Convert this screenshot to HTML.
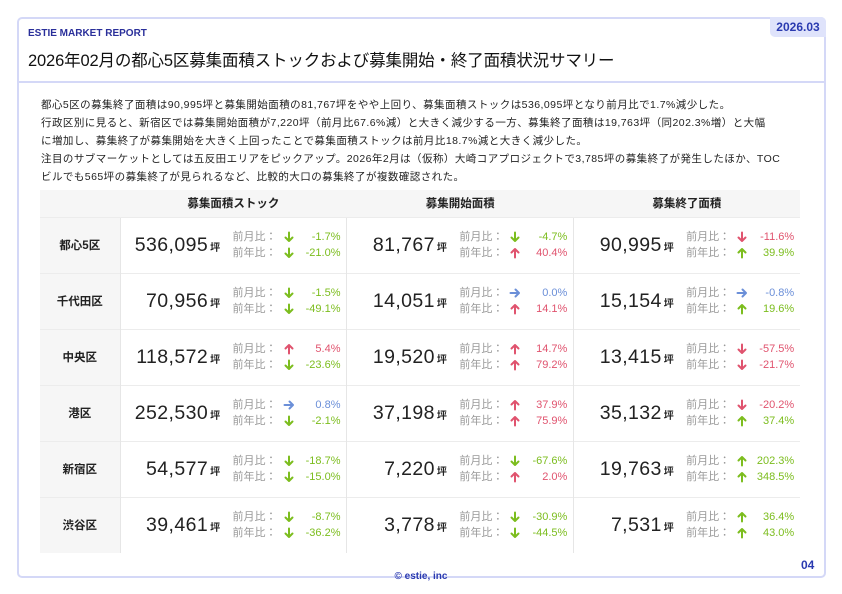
<!DOCTYPE html><html><head><meta charset="utf-8"><style>
*{margin:0;padding:0;box-sizing:border-box}
body{width:842px;height:594px;background:#fff;font-family:"Liberation Sans","Noto Sans CJK JP",sans-serif;position:relative;overflow:hidden}
.card{position:absolute;left:17px;top:17px;width:809px;height:561px;border:2px solid #d4d8f7;border-radius:5px}
.hdr{position:absolute;left:17px;top:17px;width:809px;height:66px;border-bottom:2px solid #d4d8f7}
.brand{position:absolute;left:28px;top:28px;font-size:10px;font-weight:bold;color:#2a2f9a}
.title{position:absolute;left:28px;top:47px;font-size:16.5px;color:#111;letter-spacing:-0.15px}
.badge{position:absolute;left:770px;top:17px;width:56px;height:20px;background:#dfe3fb;border-radius:0 5px 0 5px;color:#2a3ab0;font-weight:bold;font-size:12px;text-align:center;line-height:20px}
.txt{position:absolute;left:41px;top:96px;font-size:10.5px;line-height:18px;color:#222;width:790px;letter-spacing:0.45px;white-space:nowrap}
table{position:absolute;left:40px;top:190px;width:760px;border-collapse:collapse;background:#f6f6f6}
th{height:27px;font-size:11.5px;font-weight:bold;color:#222}
td{height:56px;border-top:1px solid #ececec;background:#fff;border-left:1px solid #e6e6e6}
td.l{background:#f6f6f6;font-size:11.5px;font-weight:bold;text-align:center;width:80px;border-left:none;color:#222}
.c{display:flex;align-items:center}
.n{width:100px;text-align:right;font-size:19.5px;color:#222;letter-spacing:.4px}
.n small{font-size:10px;margin-left:2px;font-weight:bold}
.cmp{margin-left:12px;font-size:11px;line-height:16px;width:108px}
.cmp div{display:flex;align-items:center}
.k{color:#999;width:50px}
.a{width:12px;height:12px}
.v{flex:1;text-align:right}
.g{color:#7cbd1e}.r{color:#e0536e}.b{color:#6b8fd8}
.foot{position:absolute;left:0;width:842px;top:571px;text-align:center;font-size:10px;font-weight:bold;color:#2a3ab0}
.pg{position:absolute;left:801px;top:558px;font-size:12px;font-weight:bold;color:#2a3ab0}
</style></head><body>
<svg width="0" height="0" style="position:absolute"><defs>
<symbol id="d" viewBox="0 0 12 12"><path d="M6 1.5V10M2.5 6.5L6 10L9.5 6.5" fill="none" stroke="currentColor" stroke-width="2" stroke-linecap="round" stroke-linejoin="round"/></symbol>
<symbol id="u" viewBox="0 0 12 12"><path d="M6 10.5V2M2.5 5.5L6 2L9.5 5.5" fill="none" stroke="currentColor" stroke-width="2" stroke-linecap="round" stroke-linejoin="round"/></symbol>
<symbol id="rt" viewBox="0 0 12 12"><path d="M1.5 6H10M6.5 2.5L10 6L6.5 9.5" fill="none" stroke="currentColor" stroke-width="2" stroke-linecap="round" stroke-linejoin="round"/></symbol>
</defs></svg>
<div class="card"></div><div class="hdr"></div>
<div class="brand">ESTIE MARKET REPORT</div>
<div class="badge">2026.03</div>
<div class="title">2026年02月の都心5区募集面積ストックおよび募集開始・終了面積状況サマリー</div>
<div class="txt">都心5区の募集終了面積は90,995坪と募集開始面積の81,767坪をやや上回り、募集面積ストックは536,095坪となり前月比で1.7%減少した。<br>行政区別に見ると、新宿区では募集開始面積が7,220坪（前月比67.6%減）と大きく減少する一方、募集終了面積は19,763坪（同202.3%増）と大幅<br>に増加し、募集終了が募集開始を大きく上回ったことで募集面積ストックは前月比18.7%減と大きく減少した。<br>注目のサブマーケットとしては五反田エリアをピックアップ。2026年2月は（仮称）大崎コアプロジェクトで3,785坪の募集終了が発生したほか、TOC<br>ビルでも565坪の募集終了が見られるなど、比較的大口の募集終了が複数確認された。</div>
<table>
<tr><th></th><th>募集面積ストック</th><th>募集開始面積</th><th>募集終了面積</th></tr>
<tr><td class="l">都心5区</td>
<td><div class="c"><div class="n">536,095<small>坪</small></div><div class="cmp"><div><span class="k">前月比：</span><svg class="a g"><use href="#d"/></svg><span class="v g">-1.7%</span></div><div><span class="k">前年比：</span><svg class="a g"><use href="#d"/></svg><span class="v g">-21.0%</span></div></div></div></td>
<td><div class="c"><div class="n">81,767<small>坪</small></div><div class="cmp"><div><span class="k">前月比：</span><svg class="a g"><use href="#d"/></svg><span class="v g">-4.7%</span></div><div><span class="k">前年比：</span><svg class="a r"><use href="#u"/></svg><span class="v r">40.4%</span></div></div></div></td>
<td><div class="c"><div class="n">90,995<small>坪</small></div><div class="cmp"><div><span class="k">前月比：</span><svg class="a r"><use href="#d"/></svg><span class="v r">-11.6%</span></div><div><span class="k">前年比：</span><svg class="a g"><use href="#u"/></svg><span class="v g">39.9%</span></div></div></div></td></tr>
<tr><td class="l">千代田区</td>
<td><div class="c"><div class="n">70,956<small>坪</small></div><div class="cmp"><div><span class="k">前月比：</span><svg class="a g"><use href="#d"/></svg><span class="v g">-1.5%</span></div><div><span class="k">前年比：</span><svg class="a g"><use href="#d"/></svg><span class="v g">-49.1%</span></div></div></div></td>
<td><div class="c"><div class="n">14,051<small>坪</small></div><div class="cmp"><div><span class="k">前月比：</span><svg class="a b"><use href="#rt"/></svg><span class="v b">0.0%</span></div><div><span class="k">前年比：</span><svg class="a r"><use href="#u"/></svg><span class="v r">14.1%</span></div></div></div></td>
<td><div class="c"><div class="n">15,154<small>坪</small></div><div class="cmp"><div><span class="k">前月比：</span><svg class="a b"><use href="#rt"/></svg><span class="v b">-0.8%</span></div><div><span class="k">前年比：</span><svg class="a g"><use href="#u"/></svg><span class="v g">19.6%</span></div></div></div></td></tr>
<tr><td class="l">中央区</td>
<td><div class="c"><div class="n">118,572<small>坪</small></div><div class="cmp"><div><span class="k">前月比：</span><svg class="a r"><use href="#u"/></svg><span class="v r">5.4%</span></div><div><span class="k">前年比：</span><svg class="a g"><use href="#d"/></svg><span class="v g">-23.6%</span></div></div></div></td>
<td><div class="c"><div class="n">19,520<small>坪</small></div><div class="cmp"><div><span class="k">前月比：</span><svg class="a r"><use href="#u"/></svg><span class="v r">14.7%</span></div><div><span class="k">前年比：</span><svg class="a r"><use href="#u"/></svg><span class="v r">79.2%</span></div></div></div></td>
<td><div class="c"><div class="n">13,415<small>坪</small></div><div class="cmp"><div><span class="k">前月比：</span><svg class="a r"><use href="#d"/></svg><span class="v r">-57.5%</span></div><div><span class="k">前年比：</span><svg class="a r"><use href="#d"/></svg><span class="v r">-21.7%</span></div></div></div></td></tr>
<tr><td class="l">港区</td>
<td><div class="c"><div class="n">252,530<small>坪</small></div><div class="cmp"><div><span class="k">前月比：</span><svg class="a b"><use href="#rt"/></svg><span class="v b">0.8%</span></div><div><span class="k">前年比：</span><svg class="a g"><use href="#d"/></svg><span class="v g">-2.1%</span></div></div></div></td>
<td><div class="c"><div class="n">37,198<small>坪</small></div><div class="cmp"><div><span class="k">前月比：</span><svg class="a r"><use href="#u"/></svg><span class="v r">37.9%</span></div><div><span class="k">前年比：</span><svg class="a r"><use href="#u"/></svg><span class="v r">75.9%</span></div></div></div></td>
<td><div class="c"><div class="n">35,132<small>坪</small></div><div class="cmp"><div><span class="k">前月比：</span><svg class="a r"><use href="#d"/></svg><span class="v r">-20.2%</span></div><div><span class="k">前年比：</span><svg class="a g"><use href="#u"/></svg><span class="v g">37.4%</span></div></div></div></td></tr>
<tr><td class="l">新宿区</td>
<td><div class="c"><div class="n">54,577<small>坪</small></div><div class="cmp"><div><span class="k">前月比：</span><svg class="a g"><use href="#d"/></svg><span class="v g">-18.7%</span></div><div><span class="k">前年比：</span><svg class="a g"><use href="#d"/></svg><span class="v g">-15.0%</span></div></div></div></td>
<td><div class="c"><div class="n">7,220<small>坪</small></div><div class="cmp"><div><span class="k">前月比：</span><svg class="a g"><use href="#d"/></svg><span class="v g">-67.6%</span></div><div><span class="k">前年比：</span><svg class="a r"><use href="#u"/></svg><span class="v r">2.0%</span></div></div></div></td>
<td><div class="c"><div class="n">19,763<small>坪</small></div><div class="cmp"><div><span class="k">前月比：</span><svg class="a g"><use href="#u"/></svg><span class="v g">202.3%</span></div><div><span class="k">前年比：</span><svg class="a g"><use href="#u"/></svg><span class="v g">348.5%</span></div></div></div></td></tr>
<tr><td class="l">渋谷区</td>
<td><div class="c"><div class="n">39,461<small>坪</small></div><div class="cmp"><div><span class="k">前月比：</span><svg class="a g"><use href="#d"/></svg><span class="v g">-8.7%</span></div><div><span class="k">前年比：</span><svg class="a g"><use href="#d"/></svg><span class="v g">-36.2%</span></div></div></div></td>
<td><div class="c"><div class="n">3,778<small>坪</small></div><div class="cmp"><div><span class="k">前月比：</span><svg class="a g"><use href="#d"/></svg><span class="v g">-30.9%</span></div><div><span class="k">前年比：</span><svg class="a g"><use href="#d"/></svg><span class="v g">-44.5%</span></div></div></div></td>
<td><div class="c"><div class="n">7,531<small>坪</small></div><div class="cmp"><div><span class="k">前月比：</span><svg class="a g"><use href="#u"/></svg><span class="v g">36.4%</span></div><div><span class="k">前年比：</span><svg class="a g"><use href="#u"/></svg><span class="v g">43.0%</span></div></div></div></td></tr>
</table>
<div class="pg">04</div>
<div class="foot">© estie, inc</div>
</body></html>
